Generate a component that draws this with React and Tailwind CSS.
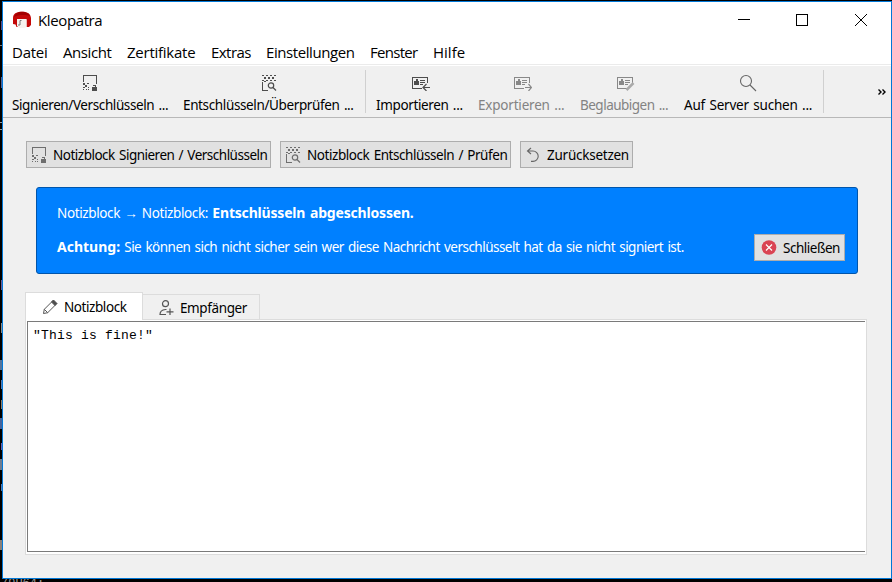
import React from "react";

const ui = "font-['Noto_Sans','Open_Sans',sans-serif] text-[13.5px] leading-[18px] [word-spacing:1.2px] whitespace-nowrap";
const menuFont = "font-['Open_Sans','Noto_Sans',sans-serif] text-[15px] leading-[20px] whitespace-nowrap";

function SignIcon({ className = "text-[#4d4d4d]" }) {
  return (
    <svg width="16" height="16" viewBox="0 0 16 16" className={className} shapeRendering="crispEdges" fill="currentColor">
      <path d="M1 0h14v9h-1V1H2v6H1zM1 8h2v2H1zM5 8h2v1H5zM3 10h2v2H3zM6 12h1v1H6zM1 12h2v1H1zM1 14h1v1H1zM4 14h1v1H4zM6 14h1v1H6zM10 12h1v-2h3v2h1v4h-5zM11 11v1h2v-1z" fillRule="evenodd" />
    </svg>
  );
}

function DecryptIcon({ className = "text-[#4d4d4d]" }) {
  return (
    <svg width="16" height="16" viewBox="0 0 16 16" className={className} fill="currentColor">
      <path shapeRendering="crispEdges" d="M1 0h2v1H1zM5 0h2v1H5zM9 0h2v1H9zM13 0h2v1h-2zM3 2h2v2H3zM7 2h2v2H7zM11 2h2v2h-2zM1 5h2v1H1zM5 5h2v1H5zM9 5h2v1H9zM13 5h2v1h-2zM1 7h1v8h5v1H1zM3 6h2v1H3z" />
      <circle cx="10" cy="10.500" r="2.700" fill="none" stroke="currentColor" strokeWidth="1.200" />
      <path d="M12 12.500l3 3" stroke="currentColor" strokeWidth="1.200" fill="none" />
    </svg>
  );
}

function CardIcon({ kind, color }) {
  return (
    <svg width="20" height="16" viewBox="0 0 20 16" fill="none" stroke={color}>
      <path shapeRendering="crispEdges" d="M12 13.500H2.500V2.500H17.500V8M10 5.500h5M10 7.500h5M10 9.500h3" />
      <path shapeRendering="crispEdges" fill={color} stroke="none" d="M5 6h1V4h2v2h1v4H4V6z" />
      {kind === "in" && <path d="M20 12.500H13.500M16.500 9l-3.500 3.500 3.500 3.500" strokeWidth="1.200" />}
      {kind === "out" && <path d="M13 12.500h6.500M16.500 9l3 3.500-3 3.500" strokeWidth="1.200" />}
      {kind === "edit" && <path d="M11.500 15l7-7" strokeWidth="2.500" stroke="#aaa" />}
    </svg>
  );
}

function SearchIcon() {
  return (
    <svg width="18" height="18" viewBox="0 0 18 18" fill="none" stroke="#666" strokeWidth="1.100">
      <circle cx="7" cy="7" r="5.500" />
      <path d="M11 11l6 6" />
    </svg>
  );
}

function UndoIcon() {
  return (
    <svg width="16" height="16" viewBox="0 0 16 16" fill="none" stroke="#666" strokeWidth="1.100">
      <path d="M6 1L2.500 4 6 7M2.500 4H8a5.200 5.200 0 0 1 0 10.400H6" />
    </svg>
  );
}

function PencilIcon() {
  return (
    <svg width="16" height="16" viewBox="0 0 16 16" fill="none" stroke="#555">
      <path d="M1.500 14.500l.8-4.200L11 1.600l3.400 3.400-8.700 8.700zM2.300 10.300l3.400 3.400" />
      <path d="M9.500 3L11.500 1l3.500 3.500-2 2z" fill="#4d4d4d" />
    </svg>
  );
}

function RecipientIcon() {
  return (
    <svg width="16" height="16" viewBox="0 0 16 16" fill="none" stroke="#555" strokeWidth="1.200">
      <circle cx="7.500" cy="3.700" r="3" />
      <path d="M8 14.500H2c0-3 2-4.700 5.500-5h1M12 8.500v6.500M8.500 11.800h7" />
    </svg>
  );
}

function CloseBadge() {
  return (
    <svg width="16" height="16" viewBox="0 0 16 16">
      <circle cx="8" cy="7.500" r="7.300" fill="#da4453" />
      <path d="M5 4.500l6 6M11 4.500l-6 6" stroke="#fff" strokeWidth="1.200" />
    </svg>
  );
}

function Logo() {
  return (
    <svg width="20" height="18" viewBox="0 0 20 18">
      <path d="M1 13V7C1 3 4 .8 10 .8S18.500 3 19 7v7l-2 2h-2.500V8.500H6V16H4.500l-1-2.500z" fill="#c40808" />
      <path d="M2 6C3 2.500 6 .8 10 .8s7 1.700 8 4.200c-4-1.500-12-1.500-16 1z" fill="#a30000" />
      <path d="M5 8h9.500v8L12 17H7l-2-2z" fill="#f7f3ef" />
      <path d="M8 9.500v4.500M8 9.500h1.500M6 14h2" stroke="#777" fill="none" />
    </svg>
  );
}

function Tool({ label, icon, width, spacing, dim }) {
  return (
    <div className={`flex shrink-0 flex-col items-center ${width} ${dim ? "text-[#838383]" : "text-black"}`}>
      <div className="flex h-[24px] items-center">{icon}</div>
      <div className={`mt-px w-full ${ui} ${spacing}`}>{label}</div>
    </div>
  );
}

function PushButton({ label, icon, width, spacing }) {
  return (
    <button className={`flex h-[27px] items-center border border-[#adadad] bg-[#e1e1e1] pl-1 text-black ${width}`}>
      {icon}
      <span className={`ml-[6px] ${ui} ${spacing}`}>{label}</span>
    </button>
  );
}

function Separator() {
  return <div className="mt-1 h-[43px] w-px shrink-0 bg-[#d0d0d0]" />;
}

const menus = [
  ["Datei", "w-[35px] tracking-[-0.25px]"],
  ["Ansicht", "w-[48px] tracking-[-0.42px]"],
  ["Zertifikate", "w-[68px] tracking-[-0.25px]"],
  ["Extras", "w-[39px] tracking-[-0.55px]"],
  ["Einstellungen", "w-[88px] tracking-[-0.42px]"],
  ["Fenster", "w-[47px] tracking-[-0.7px]"],
  ["Hilfe", "w-[32px]"],
];

function BackgroundEdge() {
  return (
    <div className="flex h-[578px] w-[2px] flex-col items-end overflow-hidden">
      <div className="mt-[20px] h-[9px] w-px bg-[#5b4a8a]" />
      <div className="mt-[15px] h-px w-[2px] bg-[#777]" />
      <div className="mt-[31px] h-[11px] w-px bg-[#4a5f9a]" />
      <div className="mt-[34px] h-px w-[2px] bg-[#999]" />
      <div className="mt-[6px] h-px w-[2px] bg-[#999]" />
      <div className="mt-[150px] h-[10px] w-px bg-[#6a5a9a]" />
      <div className="mt-[33px] h-[10px] w-px bg-[#888]" />
      <div className="mt-[27px] h-[10px] w-[2px] bg-[#54749c]" />
      <div className="mt-[10px] h-[9px] w-px bg-[#4f79b8]" />
      <div className="mt-[11px] h-[9px] w-px bg-[#8a7a66]" />
      <div className="mt-[9px] h-[11px] w-[2px] bg-[#45649c]" />
      <div className="mt-[14px] h-[7px] w-px bg-[#6a5ab0]" />
      <div className="mt-[9px] h-[11px] w-[2px] bg-[#6f7d90]" />
      <div className="mt-[14px] h-[7px] w-px bg-[#4f79b8]" />
      <div className="mt-[49px] h-[10px] w-[2px] bg-[#8a8078]" />
    </div>
  );
}

export default function App() {
  return (
    <div className="flex h-[582px] w-[892px] flex-col overflow-hidden bg-black pt-px">
      <div className="flex">
        <BackgroundEdge />
        <div className="flex h-[578px] w-[890px] flex-col border border-[#0078d7] bg-[#f0f0f0] text-black">
          <div className="flex h-[62px] shrink-0 flex-col bg-white">
            <div className="flex h-[36px] items-center pl-[9px]">
              <Logo />
              <span className={`ml-[6px] tracking-[-0.38px] ${menuFont}`}>Kleopatra</span>
              <svg className="ml-auto mr-[23px]" width="130" height="14" viewBox="0 0 130 14" fill="none" stroke="#000">
                <path shapeRendering="crispEdges" d="M0 6.500h12M58.500 1.500h11v11h-11z" />
                <path d="M117 1l12 12M129 1l-12 12" />
              </svg>
            </div>
            <nav className="flex gap-4 pl-[9px] pt-1">
              {menus.map(([t, w]) => <span key={t} className={`${menuFont} ${w}`}>{t}</span>)}
            </nav>
          </div>
          <div className="h-px shrink-0 bg-[#ebebeb]" />
          <div className="h-px shrink-0 bg-white" />
          <div className="flex h-[52px] shrink-0 border-b border-[#b8b8b8] pl-[9px]">
            <div className="flex gap-[15px] pt-[5px]">
              <Tool label="Signieren/Verschlüsseln ..." width="w-[156px]" spacing="tracking-[-0.4px]" icon={<SignIcon />} />
              <Tool label="Entschlüsseln/Überprüfen ..." width="w-[171px]" spacing="tracking-[-0.37px]" icon={<DecryptIcon />} />
            </div>
            <div className="ml-[11px] flex"><Separator /></div>
            <div className="ml-[10px] flex gap-[15px] pt-[5px]">
              <Tool label="Importieren ..." width="w-[87px]" spacing="tracking-[-0.36px]" icon={<CardIcon kind="in" color="#4d4d4d" />} />
              <Tool label="Exportieren ..." width="w-[87px]" spacing="tracking-[-0.2px]" dim icon={<CardIcon kind="out" color="#888" />} />
              <Tool label="Beglaubigen ..." width="w-[89px]" spacing="tracking-[-0.51px]" dim icon={<CardIcon kind="edit" color="#888" />} />
              <Tool label="Auf Server suchen ..." width="w-[128px]" spacing="tracking-[-0.22px]" icon={<SearchIcon />} />
            </div>
            <div className="ml-[11px] flex"><Separator /></div>
            <svg className="ml-auto mr-[5px] mt-[23px]" width="8" height="6" viewBox="0 0 8 6" fill="none" stroke="#000" strokeWidth="1.400">
              <path d="M.5.500L3 3 .5 5.500M4.500.500L7 3 4.500 5.500" />
            </svg>
          </div>

          <div className="flex gap-[9px] pl-[23px] pt-[23px]">
            <PushButton label="Notizblock Signieren / Verschlüsseln" width="w-[245px]" spacing="tracking-[-0.5px]" icon={<SignIcon className="text-[#6e6e6e]" />} />
            <PushButton label="Notizblock Entschlüsseln / Prüfen" width="w-[231px]" spacing="tracking-[-0.44px]" icon={<DecryptIcon className="text-[#6e6e6e]" />} />
            <PushButton label="Zurücksetzen" width="w-[113px]" spacing="tracking-[-0.25px]" icon={<UndoIcon />} />
          </div>

          <div className="ml-[33px] mt-[19px] flex h-[87px] w-[822px] shrink-0 justify-between rounded-[3px] border border-[#0055ab] bg-[#0080ff] pl-[20px] pr-[12px] text-white">
            <div className="pt-[16px]">
              <p className={ui}>
                <span className="tracking-[-0.38px]">Notizblock → Notizblock: </span>
                <b className="text-[14px] tracking-[-0.18px]">Entschlüsseln abgeschlossen.</b>
              </p>
              <p className={`mt-[16px] ${ui}`}>
                <b className="text-[14px]">Achtung:</b>
                <span className="tracking-[-0.52px]"> Sie können sich nicht sicher sein wer diese Nachricht verschlüsselt hat da sie nicht signiert ist.</span>
              </p>
            </div>
            <div className="pt-[46px]">
              <button className="flex h-[27px] w-[91px] items-center border border-[#adadad] bg-[#e1e1e1] pl-[6px] text-black">
                <CloseBadge />
                <span className={`ml-[6px] tracking-[-0.48px] ${ui}`}>Schließen</span>
              </button>
            </div>
          </div>

          <div className="ml-[22px] mt-[18px] flex h-[27px] shrink-0 items-end">
            <div className="z-10 -mb-px flex h-[28px] w-[118px] items-center border border-b-0 border-[#dcdcdc] bg-white pl-[16px] pt-px">
              <PencilIcon />
              <span className={`ml-[6px] tracking-[-0.43px] ${ui}`}>Notizblock</span>
            </div>
            <div className="flex h-[25px] w-[117px] items-center border border-b-0 border-l-0 border-[#dcdcdc] bg-[#f0f0f0] pl-[15px] pt-[2px]">
              <RecipientIcon />
              <span className={`ml-[6px] tracking-[-0.39px] ${ui}`}>Empfänger</span>
            </div>
          </div>
          <div className="ml-[22px] h-[236px] w-[842px] shrink-0 border border-[#dcdcdc] bg-white pl-px pt-px">
            <div className="h-[231px] w-[838px] border border-r-0 border-[#7a7a7a] bg-white pl-[5px] pt-[5px] font-['Liberation_Mono',monospace] text-[13px] leading-[18px] tracking-[0.2px] text-black">
              "This is fine!"
            </div>
          </div>
        </div>
      </div>
      <div className="flex h-[3px] overflow-hidden pl-px font-['Liberation_Mono',monospace] text-[12px] leading-[10px] text-[#9a9a9a]">
        /9U64:
      </div>
    </div>
  );
}
